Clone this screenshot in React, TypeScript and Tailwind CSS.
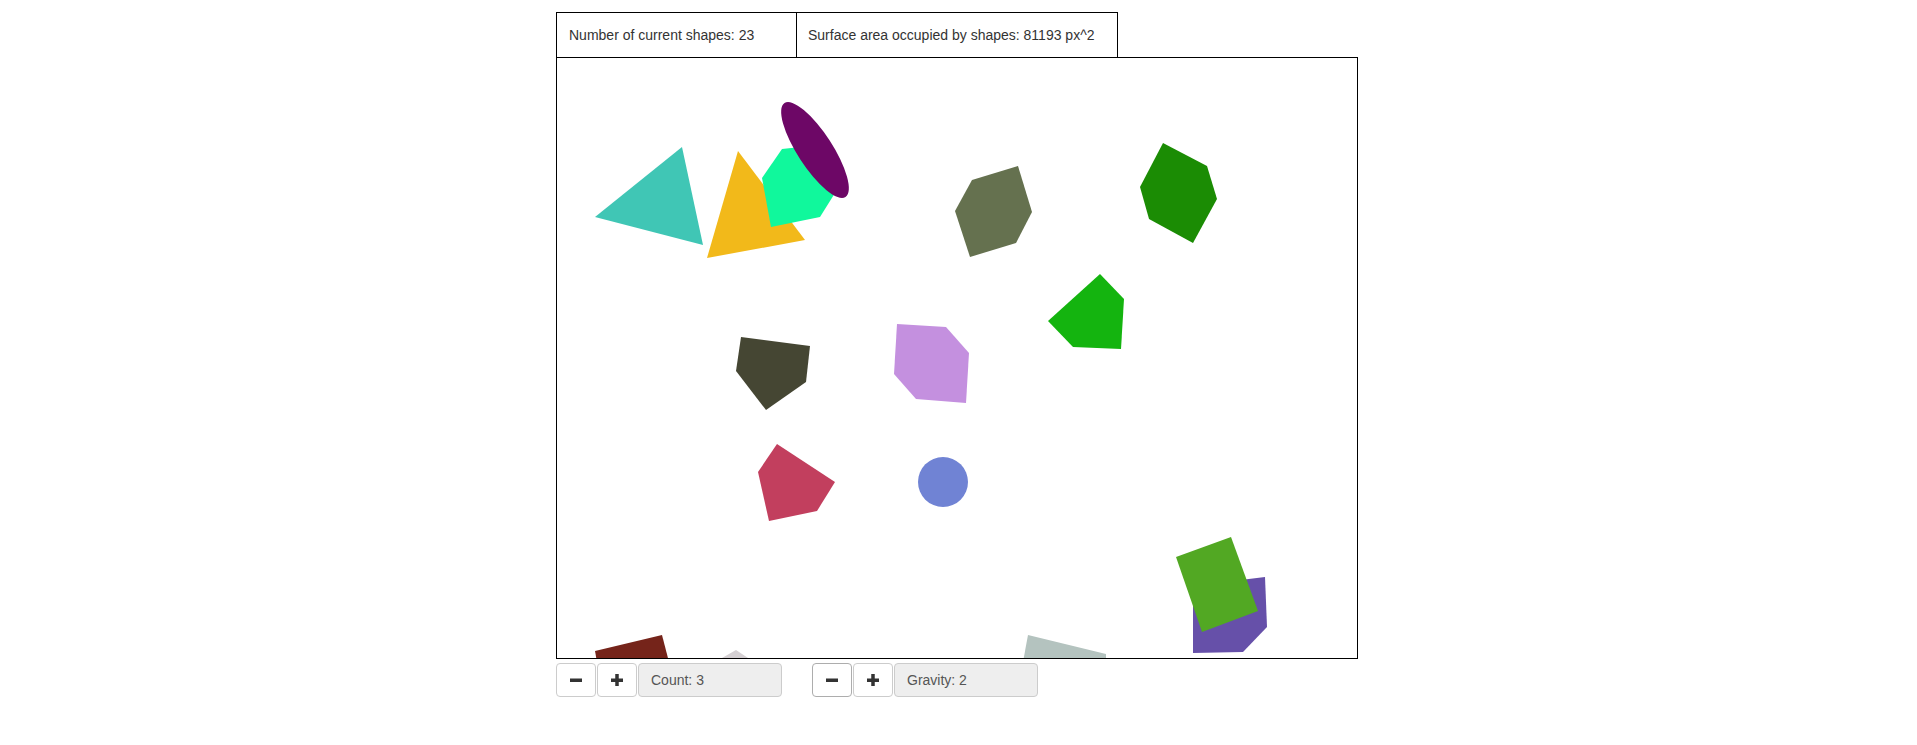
import React from 'react';

type Shape =
  | { kind: 'poly'; fill: string; points: string }
  | { kind: 'circle'; fill: string; cx: number; cy: number; r: number }
  | { kind: 'ellipse'; fill: string; cx: number; cy: number; rx: number; ry: number; rotate: number };

// coordinates are relative to the 800x600 canvas
const shapes: Shape[] = [
  { kind: 'poly', fill: '#40c6b5', points: '38,159 125,89 146,187' },
  { kind: 'poly', fill: '#f2b91a', points: '181,93 150,200 248,182' },
  { kind: 'poly', fill: '#10f89c', points: '205,120 225,91 253,88 283,127 263,159 214,169' },
  { kind: 'ellipse', fill: '#6d0766', cx: 258, cy: 92, rx: 56, ry: 17.5, rotate: 57 },
  { kind: 'poly', fill: '#65714f', points: '398,153 415,122 461,108 475,154 459,185 413,199' },
  { kind: 'poly', fill: '#1b8c04', points: '583,129 606,85 650,108 660,141 636,185 592,161' },
  { kind: 'poly', fill: '#14b40f', points: '491,263 543,216 567,241 564,291 516,289' },
  { kind: 'poly', fill: '#454633', points: '179,313 184,279 253,288 249,324 209,352' },
  { kind: 'poly', fill: '#c490df', points: '337,316 340,266 389,269 412,295 409,345 359,341' },
  { kind: 'poly', fill: '#c23f5e', points: '220,386 278,424 260,453 212,463 201,414' },
  { kind: 'circle', fill: '#7083d4', cx: 386, cy: 424, r: 25 },
  { kind: 'poly', fill: '#6650a9', points: '643,527 708,519 710,569 686,594 636,595 636,548' },
  { kind: 'poly', fill: '#52a823', points: '619,499 674,479 701,553 645,574' },
  { kind: 'poly', fill: '#75241a', points: '38,593 105,577 112,604 40,604' },
  { kind: 'poly', fill: '#d5d0d3', points: '179,592 158,604 197,604' },
  { kind: 'poly', fill: '#b4c3bf', points: '471,577 549,596 549,604 466,604' },
];

function MinusIcon() {
  return (
    <svg width="12" height="12" viewBox="0 0 12 12">
      <rect x="0" y="4.5" width="12" height="3.5" fill="#333" />
    </svg>
  );
}

function PlusIcon() {
  return (
    <svg width="12" height="12" viewBox="0 0 12 12">
      <rect x="0" y="4.5" width="12" height="3.5" fill="#333" />
      <rect x="4.25" y="0" width="3.5" height="12" fill="#333" />
    </svg>
  );
}

function Stepper({ label, focused }: { label: string; focused?: boolean }) {
  return (
    <div className="flex gap-[1px]">
      <button
        className={
          'flex h-[34px] w-[40px] items-center justify-center rounded-[4px] border bg-white ' +
          (focused ? 'border-[#adadad]' : 'border-[#ccc]')
        }
      >
        <MinusIcon />
      </button>
      <button className="flex h-[34px] w-[40px] items-center justify-center rounded-[4px] border border-[#ccc] bg-white">
        <PlusIcon />
      </button>
      <div className="flex h-[34px] w-[144px] items-center rounded-[4px] border border-[#ccc] bg-[#eee] pl-[12px] text-[14px] text-[#555]">
        {label}
      </div>
    </div>
  );
}

export default function App() {
  return (
    <div
      className="min-h-screen bg-white pl-[556px] pt-[12px] text-[14px] text-[#333]"
      style={{ fontFamily: '"Liberation Sans", Arial, sans-serif' }}
    >
      <div className="flex">
        <div className="flex h-[45px] w-[241px] items-center border-l border-r border-t border-black pl-[12px]">
          Number of current shapes: 23
        </div>
        <div className="flex h-[45px] w-[321px] items-center border-r border-t border-black pl-[11px]">
          Surface area occupied by shapes: 81193 px^2
        </div>
      </div>

      <div className="h-[602px] w-[802px] border border-black">
        <svg width="800" height="600" viewBox="0 0 800 600" className="block overflow-hidden">
          {shapes.map((s, i) => {
            if (s.kind === 'circle') return <circle key={i} cx={s.cx} cy={s.cy} r={s.r} fill={s.fill} />;
            if (s.kind === 'ellipse')
              return (
                <ellipse
                  key={i}
                  cx={s.cx}
                  cy={s.cy}
                  rx={s.rx}
                  ry={s.ry}
                  fill={s.fill}
                  transform={`rotate(${s.rotate} ${s.cx} ${s.cy})`}
                />
              );
            return <polygon key={i} points={s.points} fill={s.fill} />;
          })}
        </svg>
      </div>

      <div className="mt-[4px] flex gap-[30px]">
        <Stepper label="Count: 3" />
        <Stepper label="Gravity: 2" focused />
      </div>
    </div>
  );
}
